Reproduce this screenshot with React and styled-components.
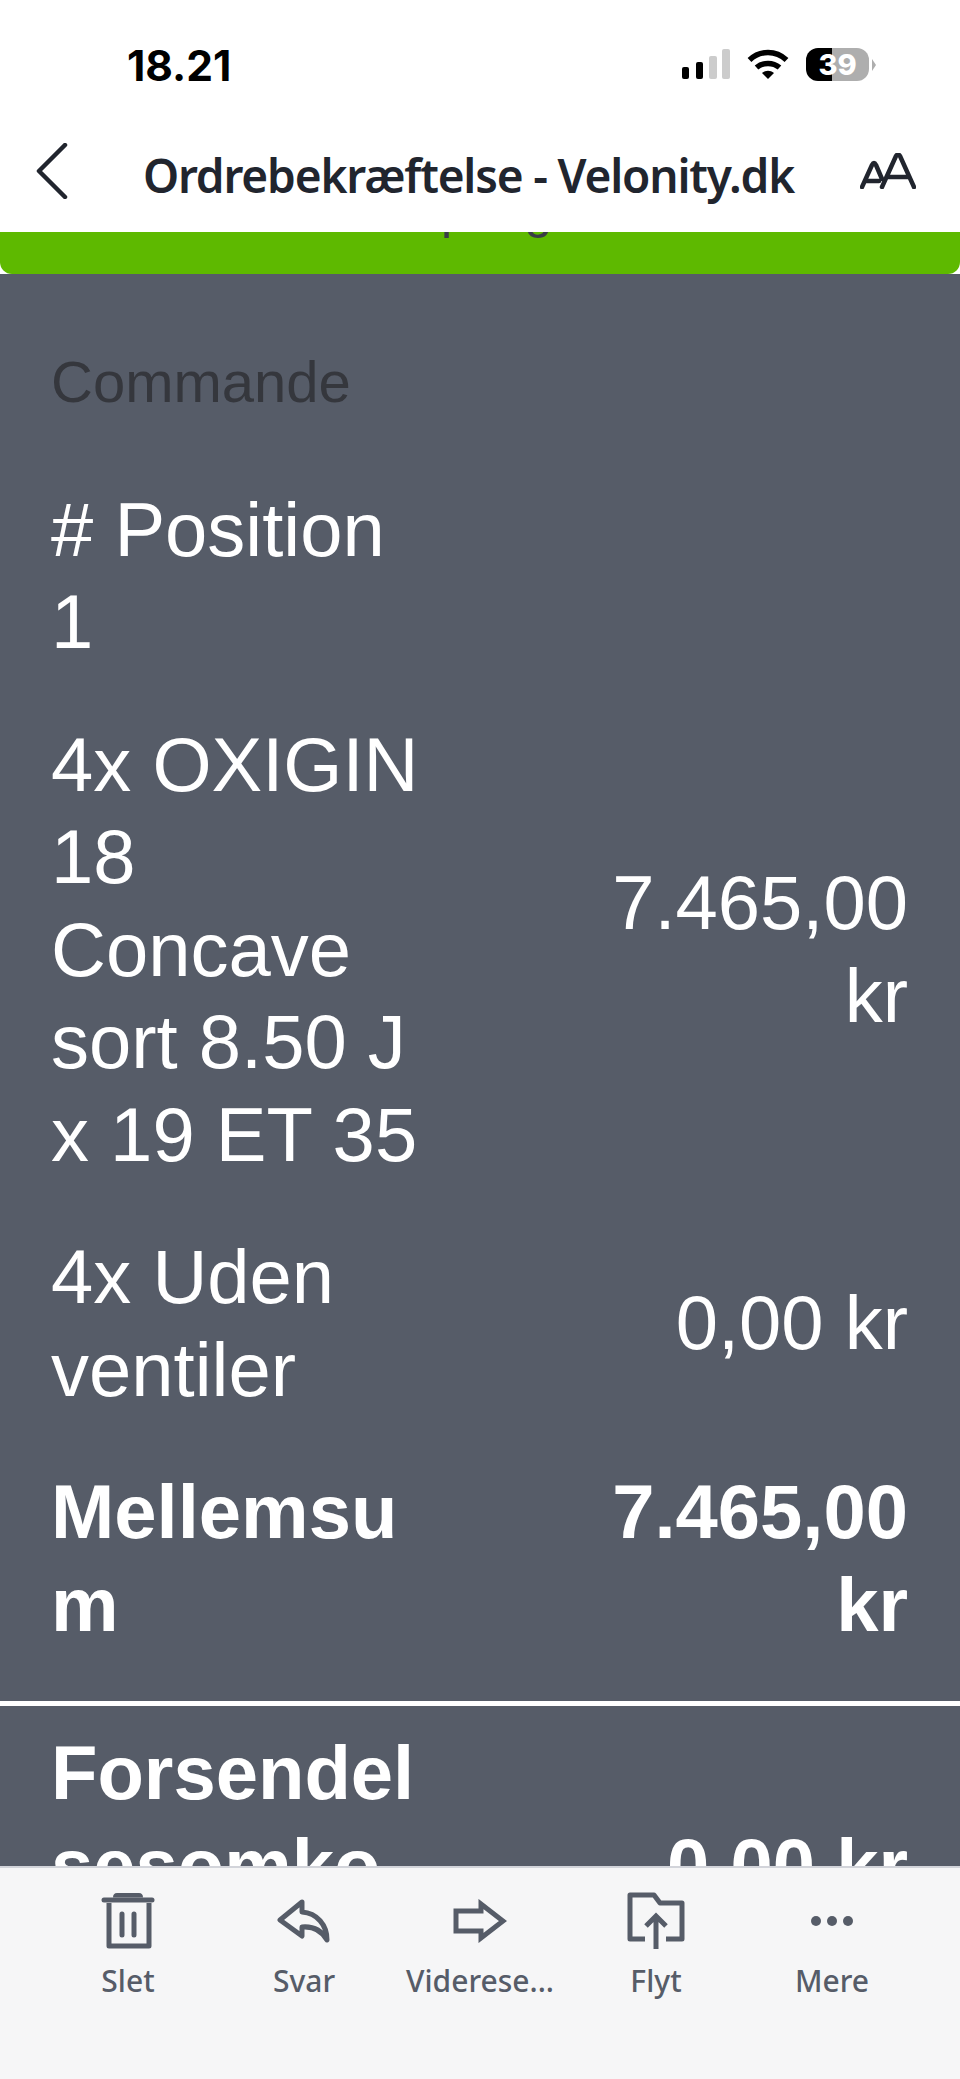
import styled, { createGlobalStyle } from "styled-components";

const GlobalStyle = createGlobalStyle`
  html, body {
    margin: 0;
    padding: 0;
    background: #fff;
  }
`;

const Screen = styled.div`
  width: 960px;
  height: 2079px;
  display: flex;
  flex-direction: column;
  overflow: hidden;
  background: #fff;
`;

const StatusBar = styled.div`
  height: 100px;
  flex-shrink: 0;
  display: flex;
  justify-content: space-between;
  align-items: flex-start;
  padding: 48px 91px 0 127px;
  box-sizing: border-box;
`;

const Time = styled.div`
  font-family: Inter, sans-serif;
  font-weight: 700;
  font-size: 42.5px;
  line-height: 36px;
  color: #000;
`;

const StatusIcons = styled.div`
  display: flex;
  align-items: flex-start;
`;

const Signal = styled.svg`
  width: 48px;
  height: 31px;
  margin-right: 17px;
`;

const Wifi = styled.svg`
  width: 42px;
  height: 31px;
  margin-right: 17px;
`;

const Battery = styled.div`
  position: relative;
  width: 63px;
  height: 33px;
  border-radius: 12px;
  background: linear-gradient(90deg, #000 0 26px, #aeaeae 26px);
  color: #fff;
  font-family: Inter, sans-serif;
  font-weight: 800;
  font-size: 29px;
  line-height: 33px;
  text-align: center;

  &::after {
    content: "";
    position: absolute;
    left: 66px;
    top: 11px;
    border-left: 4px solid #aeaeae;
    border-top: 6px solid transparent;
    border-bottom: 6px solid transparent;
  }
`;

const NavBar = styled.div`
  height: 132px;
  flex-shrink: 0;
  display: flex;
  align-items: center;
  justify-content: space-between;
  padding: 10px 44px 0 36px;
  box-sizing: border-box;
  color: #21252e;
`;

const Title = styled.div`
  margin: 8px 0 0 9px;
  font-family: "Noto Sans", sans-serif;
  font-weight: 600;
  font-size: 46px;
  letter-spacing: -1.17px;
  line-height: 60px;
  white-space: nowrap;
`;

const Mail = styled.div`
  flex: 1;
  min-height: 0;
  overflow: hidden;
`;

const Banner = styled.div`
  height: 42px;
  overflow: hidden;
  background: #5eb900;
  border-radius: 0 0 12px 12px;
`;

const BannerText = styled.div`
  margin-top: -57px;
  font-family: "Liberation Sans", Arial, sans-serif;
  font-size: 50px;
  line-height: 72px;
  text-align: center;
  color: #3a3d47;
`;

const Order = styled.div`
  background: #565c68;
  padding-top: 72px;
  color: #fff;
  font-family: "Liberation Sans", Arial, sans-serif;
  font-size: 76px;
  line-height: 92.6px;
`;

const Heading = styled.div`
  padding: 0 52px 0 51px;
  font-size: 58px;
  line-height: 72px;
  color: #35373d;
  margin-bottom: 41px;
`;

const Row = styled.div`
  display: flex;
  justify-content: space-between;
  align-items: center;
  padding: ${(p) => (p.$last ? "21px" : "24.8px")} 52px ${(p) => (p.$divider ? "50px" : "24.8px")} 51px;
  font-weight: ${(p) => (p.$bold ? 700 : 400)};
  border-bottom: ${(p) => (p.$divider ? "5px solid #fff" : "none")};
`;

const Label = styled.div`
  width: 368px;
  flex-shrink: 0;
  overflow-wrap: anywhere;
`;

const Amount = styled.div`
  width: 330px;
  flex-shrink: 0;
  text-align: right;
`;

const Toolbar = styled.div`
  height: 213px;
  flex-shrink: 0;
  box-sizing: border-box;
  border-top: 2px solid #d2d4da;
  background: #f6f6f7;
  padding: 24px 40px 0;
  display: grid;
  grid-template-columns: repeat(5, 176px);
  align-items: start;
`;

const Action = styled.div`
  display: flex;
  flex-direction: column;
  align-items: center;
  color: #565c68;
`;

const ActionIcon = styled.div`
  height: 58px;
  display: flex;
  align-items: center;
  justify-content: center;
`;

const ActionLabel = styled.div`
  margin-top: 11px;
  font-family: "Noto Sans", sans-serif;
  font-weight: 500;
  font-size: 30px;
  line-height: 40px;
  white-space: nowrap;
`;

const TrashIcon = () => (
  <svg width="54" height="58" viewBox="0 0 54 58" fill="none" stroke="currentColor">
    <path d="M12 5.5 Q12 1 16 1 H38 Q42 1 42 5.5 Z" fill="currentColor" stroke="none" />
    <path d="M3 8 H51" strokeWidth="5" strokeLinecap="round" />
    <path d="M8 11 V54 H48 V11" strokeWidth="5" strokeLinejoin="round" />
    <path d="M21 22 V43 M33 22 V43" strokeWidth="5" strokeLinecap="round" />
  </svg>
);

const ReplyIcon = () => (
  <svg width="54" height="44" viewBox="0 0 54 44" fill="none" stroke="currentColor" strokeWidth="5" strokeLinejoin="round" strokeLinecap="round">
    <path d="M25 3 L3 21 L25 37 V28 C37 27 45 32 50 41 C50 26 40 14 25 13 Z" />
  </svg>
);

const ForwardIcon = () => (
  <svg width="54" height="44" viewBox="0 0 54 44" fill="none" stroke="currentColor" strokeWidth="5" strokeLinejoin="miter">
    <path d="M3 12 H28 V5 L50 22 L28 39 V32 H3 Z" />
  </svg>
);

const MoveIcon = () => (
  <svg width="58" height="58" viewBox="0 0 58 58" fill="none" stroke="currentColor" strokeWidth="5">
    <path d="M18 47 H3 V3 H27 L33 11 H55 V47 H39" strokeLinejoin="round" />
    <path d="M29 57 V24 M19 34 L29 24 L39 34" />
  </svg>
);

const MoreIcon = () => (
  <svg width="44" height="12" viewBox="0 0 44 12" fill="currentColor">
    <circle cx="6" cy="6" r="5" />
    <circle cx="22" cy="6" r="5" />
    <circle cx="38" cy="6" r="5" />
  </svg>
);

const actions = [
  { label: "Slet", icon: <TrashIcon /> },
  { label: "Svar", icon: <ReplyIcon /> },
  { label: "Viderese...", icon: <ForwardIcon /> },
  { label: "Flyt", icon: <MoveIcon /> },
  { label: "Mere", icon: <MoreIcon /> },
];

const App = () => {
  return (
    <Screen>
      <GlobalStyle />
      <StatusBar>
        <Time>18.21</Time>
        <StatusIcons>
          <Signal viewBox="0 0 48 31">
            <rect x="0" y="19" width="7" height="12" rx="2" fill="#000" />
            <rect x="14" y="14" width="7" height="17" rx="2" fill="#000" />
            <rect x="27" y="8" width="8" height="23" rx="2" fill="#ccc" />
            <rect x="40" y="1" width="8" height="30" rx="2" fill="#ccc" />
          </Signal>
          <Wifi viewBox="0 0 42 31" fill="none" stroke="#000" strokeWidth="5.5">
            <path d="M2.5 12 C13 2 29 2 39.5 12" />
            <path d="M9.5 19.5 C16 14 26 14 32.5 19.5" />
            <path d="M15 25 L21 31 L27 25 C23 22 19 22 15 25 Z" fill="#000" stroke="none" />
          </Wifi>
          <Battery>39</Battery>
        </StatusIcons>
      </StatusBar>
      <NavBar>
        <svg width="32" height="56" viewBox="0 0 32 56" fill="none" stroke="currentColor" strokeWidth="4.5" strokeLinecap="round" strokeLinejoin="round">
          <path d="M29 2 L3 28 L29 54" />
        </svg>
        <Title>Ordrebekræftelse - Velonity.dk</Title>
        <svg width="56" height="36" viewBox="0 0 56 36" fill="none" stroke="currentColor" strokeWidth="4.5" strokeLinecap="round" strokeLinejoin="round">
          <path d="M2 34 L12 12 Q14 8 16 12 L22 26 M6 28 H19" />
          <path d="M22 34 L36 3 Q38 0 40 3 L54 34 M27 24 H48" />
        </svg>
      </NavBar>
      <Mail>
        <Banner>
          <BannerText>Spring</BannerText>
        </Banner>
        <Order>
          <Heading>Commande</Heading>
          <Row>
            <Label># Position<br />1</Label>
          </Row>
          <Row>
            <Label>4x OXIGIN 18 Concave sort 8.50 J x 19 ET 35</Label>
            <Amount>7.465,00 kr</Amount>
          </Row>
          <Row>
            <Label>4x Uden ventiler</Label>
            <Amount>0,00 kr</Amount>
          </Row>
          <Row $bold $divider>
            <Label>Mellemsum</Label>
            <Amount>7.465,00 kr</Amount>
          </Row>
          <Row $bold $last>
            <Label>Forsendelsesomkostninger</Label>
            <Amount>0,00 kr</Amount>
          </Row>
        </Order>
      </Mail>
      <Toolbar>
        {actions.map((action) => (
          <Action key={action.label}>
            <ActionIcon>{action.icon}</ActionIcon>
            <ActionLabel>{action.label}</ActionLabel>
          </Action>
        ))}
      </Toolbar>
    </Screen>
  );
};

export default App;
